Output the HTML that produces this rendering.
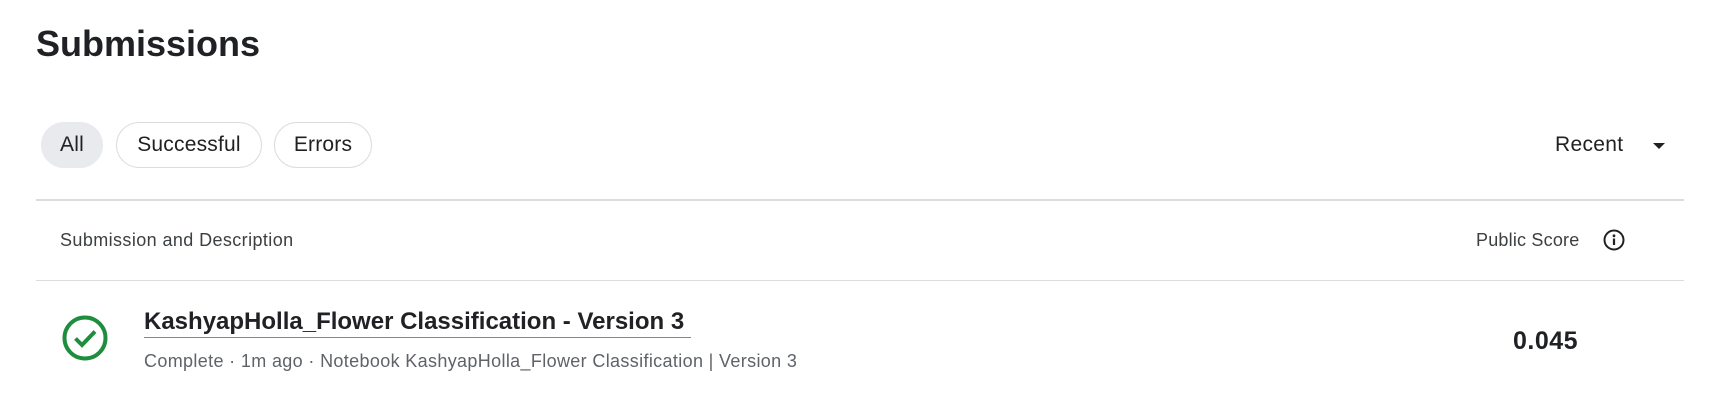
<!DOCTYPE html>
<html><head><style>
body{margin:0;width:1726px;height:403px;background:#fff;font-family:"Liberation Sans",sans-serif;color:#202124;position:relative;overflow:hidden}
.a{position:absolute;white-space:nowrap}
.pill{position:absolute;top:122px;height:46px;border:1px solid #dadce0;border-radius:24px;box-sizing:border-box;font-size:21px;line-height:44px;text-align:center;color:#202124;letter-spacing:0.2px}
</style></head><body>
<div class="a" style="left:36px;top:23px;font-size:36px;font-weight:bold;">Submissions</div>
<div class="pill" style="left:41px;width:62px;background:#e8eaed;border-color:#e8eaed">All</div>
<div class="pill" style="left:116px;width:146px">Successful</div>
<div class="pill" style="left:274px;width:98px">Errors</div>
<div class="a" style="left:1555px;top:133px;font-size:21px;letter-spacing:0.3px">Recent</div>
<svg class="a" style="left:1651px;top:141px" width="16" height="10"><path d="M2 2h12l-6 6z" fill="#202124"/></svg>
<div class="a" style="left:36px;top:199px;width:1648px;height:2px;background:#dadce0"></div>
<div class="a" style="left:60px;top:230px;font-size:18px;color:#3c4043;letter-spacing:0.4px">Submission and Description</div>
<div class="a" style="left:1476px;top:230px;font-size:18px;color:#3c4043;letter-spacing:0.2px">Public Score</div>
<svg class="a" style="left:1603px;top:229px" width="22" height="22"><circle cx="11" cy="11" r="9.5" fill="none" stroke="#202124" stroke-width="2"/><circle cx="11" cy="6.8" r="1.4" fill="#202124"/><rect x="9.9" y="9.5" width="2.2" height="6.5" fill="#202124"/></svg>
<div class="a" style="left:36px;top:280px;width:1648px;height:1px;background:#dadce0"></div>
<svg class="a" style="left:61px;top:314px" width="48" height="48"><circle cx="24" cy="24" r="20.5" fill="none" stroke="#1e8e3e" stroke-width="4"/><path d="M14.5 24.5l6.5 6.5 13-13.5" fill="none" stroke="#1e8e3e" stroke-width="4"/></svg>
<div class="a" style="left:144px;top:308px;font-size:24px;font-weight:bold;color:#202124;letter-spacing:0px">KashyapHolla_Flower Classification - Version 3</div>
<div class="a" style="left:144px;top:337px;width:547px;height:1px;background:#80868b"></div>
<div class="a" style="left:144px;top:351px;font-size:18px;color:#5f6368;letter-spacing:0.35px">Complete · 1m ago · Notebook KashyapHolla_Flower Classification | Version 3</div>
<div class="a" style="left:1513px;top:327px;font-size:25px;font-weight:bold;letter-spacing:0.5px">0.045</div>
</body></html>
